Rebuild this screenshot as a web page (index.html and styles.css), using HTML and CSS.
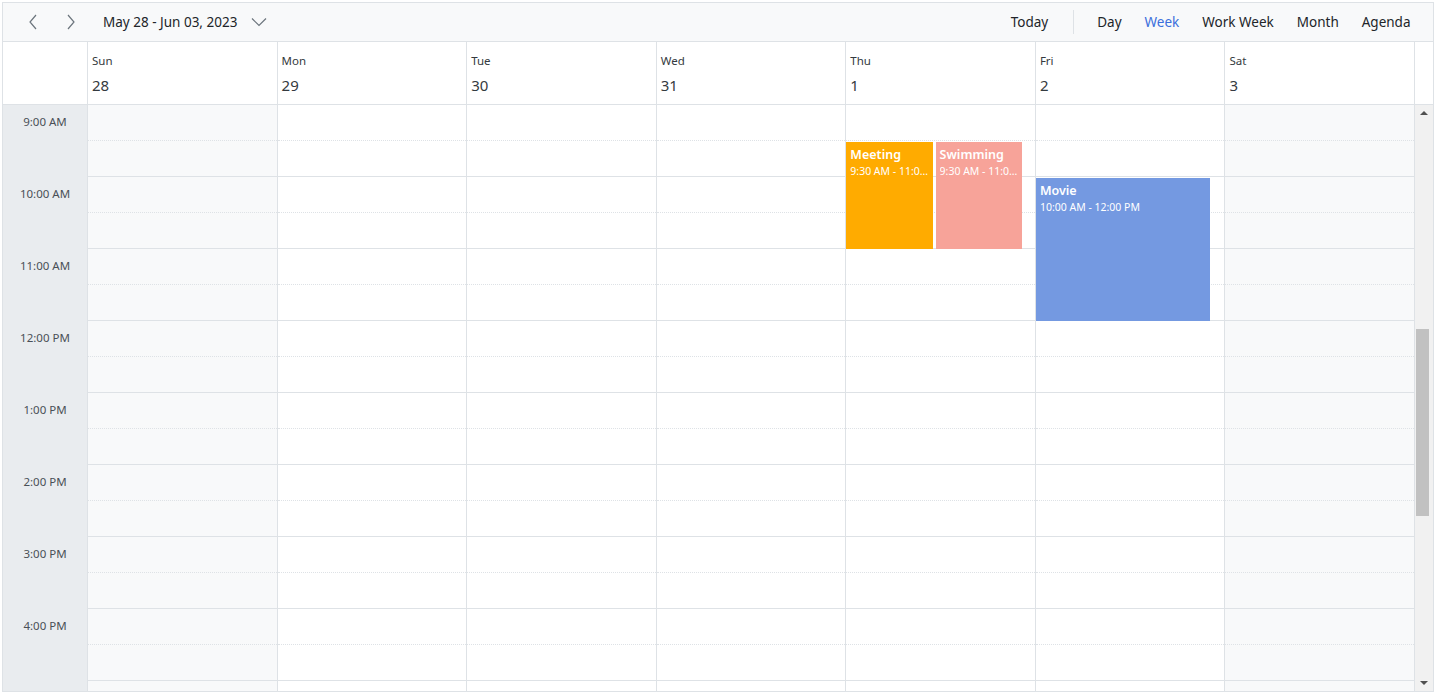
FILE: index.html
```html
<!DOCTYPE html>
<html lang="en">

<head>
  <meta charset="UTF-8">
  <meta name="viewport" content="width=device-width, initial-scale=1.0">
  <title>Scheduler - Week</title>
  <link rel="stylesheet" href="styles.css">
</head>

<body>
  <div class="scheduler">
    <div class="toolbar">
      <div class="toolbar-left">
        <button class="icon-btn" title="Previous">
          <svg width="12" height="16" viewBox="0 0 12 16"><path d="M9 1 L3 8 L9 15" fill="none" stroke="#6c757d" stroke-width="1.2"/></svg>
        </button>
        <button class="icon-btn" title="Next">
          <svg width="12" height="16" viewBox="0 0 12 16"><path d="M3 1 L9 8 L3 15" fill="none" stroke="#6c757d" stroke-width="1.2"/></svg>
        </button>
        <button class="date-range">
          May 28 - Jun 03, 2023
          <svg width="16" height="10" viewBox="0 0 16 10"><path d="M1 1.5 L8 8.5 L15 1.5" fill="none" stroke="#6c757d" stroke-width="1.2"/></svg>
        </button>
      </div>
      <div class="toolbar-right">
        <button class="tb-btn">Today</button>
        <span class="separator"></span>
        <button class="tb-btn">Day</button>
        <button class="tb-btn active">Week</button>
        <button class="tb-btn">Work Week</button>
        <button class="tb-btn">Month</button>
        <button class="tb-btn">Agenda</button>
      </div>
    </div>

    <div class="header-row">
      <div class="corner"></div>
      <div class="day-headers">
        <div class="day-head"><span class="day-name">Sun</span><span class="day-date">28</span></div>
        <div class="day-head"><span class="day-name">Mon</span><span class="day-date">29</span></div>
        <div class="day-head"><span class="day-name">Tue</span><span class="day-date">30</span></div>
        <div class="day-head"><span class="day-name">Wed</span><span class="day-date">31</span></div>
        <div class="day-head"><span class="day-name">Thu</span><span class="day-date">1</span></div>
        <div class="day-head"><span class="day-name">Fri</span><span class="day-date">2</span></div>
        <div class="day-head"><span class="day-name">Sat</span><span class="day-date">3</span></div>
      </div>
      <div class="scroll-gap"></div>
    </div>

    <div class="content">
      <div class="time-col" id="timeCol"></div>
      <div class="days" id="days"></div>
      <div class="scrollbar">
        <span class="arrow up"></span>
        <div class="track"><div class="thumb"></div></div>
        <span class="arrow down"></span>
      </div>
    </div>
  </div>

  <script>
    const hours = ["9:00 AM", "10:00 AM", "11:00 AM", "12:00 PM", "1:00 PM", "2:00 PM", "3:00 PM", "4:00 PM"];
    const slotHeight = 36;

    // events: day index, start/end in minutes from 9:00, column index & count for overlaps
    const events = [
      { day: 4, title: "Meeting", time: "9:30 AM - 11:00 AM", start: 30, end: 120, color: "#ffab00", col: 0, cols: 2 },
      { day: 4, title: "Swimming", time: "9:30 AM - 11:00 AM", start: 30, end: 120, color: "#f7a399", col: 1, cols: 2 },
      { day: 5, title: "Movie", time: "10:00 AM - 12:00 PM", start: 60, end: 180, color: "#7499e1", col: 0, cols: 1 }
    ];

    const timeCol = document.getElementById("timeCol");
    hours.forEach(h => {
      timeCol.innerHTML += `<div class="time-cell"><span>${h}</span></div>`;
    });

    const days = document.getElementById("days");
    for (let d = 0; d < 7; d++) {
      let col = document.createElement("div");
      col.className = "day-col" + (d === 0 || d === 6 ? " weekend" : "");
      let slots = "";
      for (let i = 0; i < (hours.length + 1) * 2; i++) {
        slots += `<div class="slot ${i % 2 === 0 ? "half" : "hour"}"></div>`;
      }
      col.innerHTML = slots + `<div class="event-area"></div>`;
      days.appendChild(col);
    }

    const areas = document.querySelectorAll(".event-area");
    events.forEach(ev => {
      let top = ev.start / 30 * slotHeight + 1;
      let height = (ev.end - ev.start) / 30 * slotHeight - 1;
      let w = 100 / ev.cols;
      areas[ev.day].innerHTML += `
        <div class="event" style="top:${top}px;height:${height}px;left:calc(${w * ev.col}% + ${ev.col * 2}px);width:calc(${w}% - ${ev.cols > 1 ? 1 : 0}px);background:${ev.color}">
          <div class="event-title">${ev.title}</div>
          <div class="event-time">${ev.time}</div>
        </div>`;
    });
  </script>
</body>

</html>
```

FILE: styles.css
```css
body {
  margin: 0;
  font-family: "Noto Sans", "Open Sans", sans-serif;
  background: #fff;
  color: #212529;
}
button {
  font-family: inherit;
  border: none;
  background: none;
  cursor: pointer;
  color: #212529;
}
.scheduler {
  margin: 2px;
  width: 1432px;
  box-sizing: border-box;
  border: 1px solid #dee2e6;
}

/* toolbar */
.toolbar {
  display: flex;
  justify-content: space-between;
  align-items: center;
  height: 38px;
  background: #f8f9fa;
  border-bottom: 1px solid #dee2e6;
  padding: 0 11px 0 11px;
}
.toolbar-left,
.toolbar-right {
  display: flex;
  align-items: center;
}
.icon-btn {
  width: 38px;
  height: 30px;
  display: flex;
  align-items: center;
  justify-content: center;
  padding: 0;
}
.date-range {
  display: flex;
  align-items: center;
  gap: 14px;
  font-size: 13.5px;
  padding: 0 8px;
  margin-left: 5px;
}
.tb-btn {
  font-size: 13.5px;
  padding: 6px 11.5px;
}
.tb-btn.active {
  color: #3b6fdc;
}
.separator {
  width: 1px;
  height: 24px;
  background: #dee2e6;
  margin: 0 12px 0 13px;
}

/* header */
.header-row {
  display: flex;
  height: 62px;
  border-bottom: 1px solid #dee2e6;
}
.corner {
  width: 84px;
}
.day-headers {
  flex: 1;
  display: flex;
  border-right: 1px solid #dee2e6;
}
.day-head {
  flex: 1;
  display: flex;
  flex-direction: column;
  border-left: 1px solid #dee2e6;
  padding: 11px 0 0 4px;
}
.day-name {
  font-size: 11.5px;
  color: #343a40;
  height: 16px;
}
.day-date {
  font-size: 15px;
  color: #343a40;
  margin-top: 6px;
}
.scroll-gap {
  width: 18px;
}

/* body */
.content {
  display: flex;
  height: 586px;
  overflow: hidden;
}
.time-col {
  width: 84px;
  background: #e9ecef;
  flex-shrink: 0;
}
.time-cell {
  height: 72px;
}
.time-cell span {
  display: flex;
  height: 33px;
  align-items: center;
  justify-content: center;
  font-size: 11.5px;
  color: #495057;
}
.days {
  flex: 1;
  display: flex;
  border-right: 1px solid #dee2e6;
  align-self: flex-start;
}
.day-col {
  flex: 1;
  position: relative;
  border-left: 1px solid #dee2e6;
}
.day-col.weekend {
  background: #f8f9fa;
}
.slot {
  height: 36px;
  box-sizing: border-box;
}
.slot.half {
  border-bottom: 1px dotted #dee2e6;
}
.slot.hour {
  border-bottom: 1px solid #dee2e6;
}
.event-area {
  position: absolute;
  top: 0;
  left: 0;
  right: 14px;
}
.event {
  position: absolute;
  box-sizing: border-box;
  padding: 4px 4px;
  color: #fff;
  overflow: hidden;
}
.event-title {
  font-size: 12.5px;
  font-weight: 600;
  white-space: nowrap;
}
.event-time {
  font-size: 10.5px;
  margin-top: 1px;
  white-space: nowrap;
  overflow: hidden;
  text-overflow: ellipsis;
}

/* scrollbar */
.scrollbar {
  width: 18px;
  background: #f1f1f1;
  display: flex;
  flex-direction: column;
  align-items: center;
  flex-shrink: 0;
}
.arrow {
  width: 0;
  height: 0;
  border-left: 4px solid transparent;
  border-right: 4px solid transparent;
  margin: 6px 0;
}
.arrow.up {
  border-bottom: 4px solid #505050;
}
.arrow.down {
  border-top: 4px solid #505050;
}
.track {
  flex: 1;
  width: 100%;
  position: relative;
}
.thumb {
  margin: 208px 0 0 1px;
  width: 13px;
  height: 187px;
  background: #c1c1c1;
}
```
